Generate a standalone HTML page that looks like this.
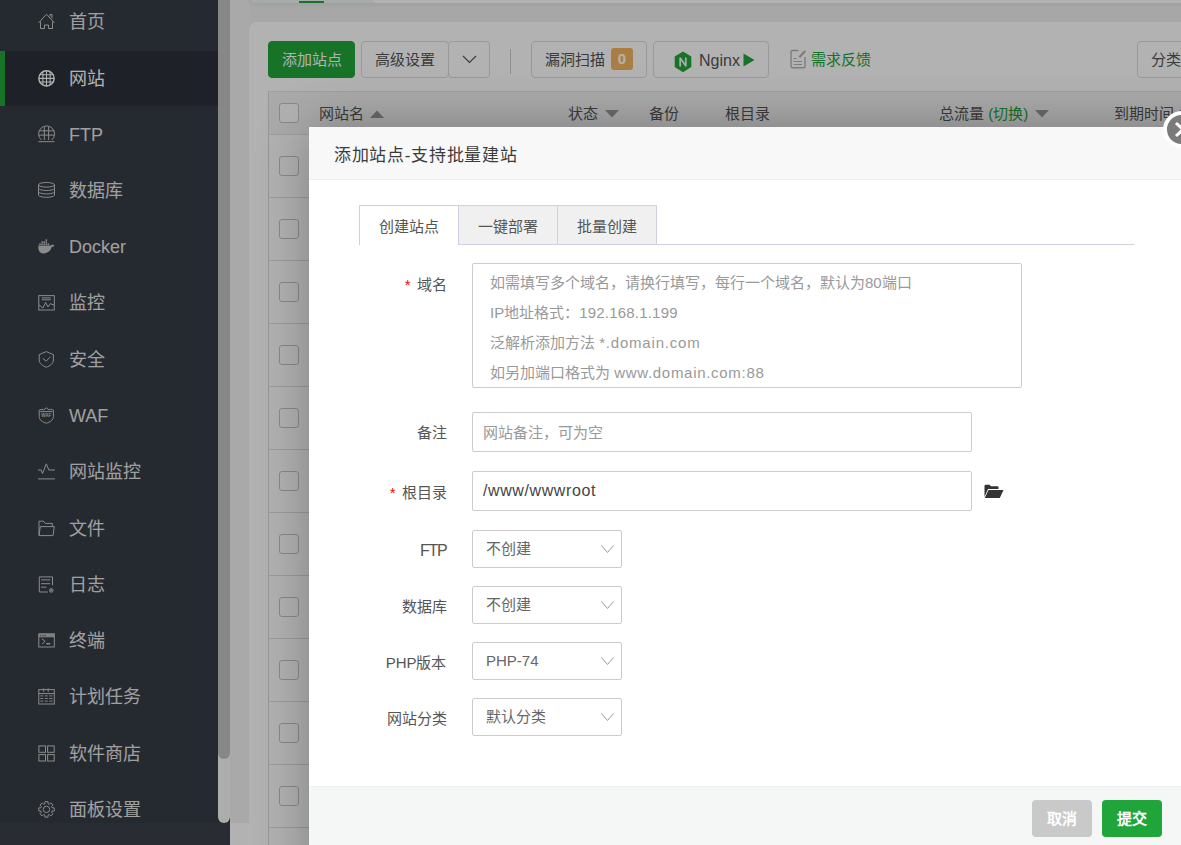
<!DOCTYPE html>
<html lang="zh-CN"><head><meta charset="utf-8">
<style>
*{box-sizing:border-box;margin:0;padding:0}
html,body{width:1181px;height:845px;overflow:hidden}
body{font-family:"Liberation Sans",sans-serif;background:#f0f0f0;position:relative;color:#333}
.abs{position:absolute}
#side{left:0;top:0;width:218px;height:823px;background:#363b45;overflow:hidden}
#sidebot{left:0;top:823px;width:230px;height:22px;background:#3c4149}
.item{position:absolute;left:0;width:218px;height:56px;color:#e6e6e6;font-size:18px}
.item svg{position:absolute;left:38px;top:19.5px;width:17px;height:17px;overflow:visible}
.item .tx{position:absolute;left:69px;top:1px;line-height:56px;white-space:nowrap}
.item.act{background:#2c3038;color:#fff}
.item.act:before{content:"";position:absolute;left:0;top:0;width:5px;height:100%;background:#20a53a}
#pagebg{left:230px;top:0;width:19px;height:823px;background:#f2f2f2}
#sbtrack{left:218px;top:0;width:12px;height:823px;background:#f8f8f8;border-radius:0 0 6px 6px}
#sbthumb{left:218px;top:0;width:12px;height:759px;background:#c2c2c2;border-radius:0 0 6px 6px}
#topcard{left:250px;top:-40px;width:940px;height:43px;background:#fff;border-radius:0 0 0 6px;box-shadow:0 2px 4px rgba(0,0,0,.06)}
#toptab{left:250px;top:-40px;width:124px;height:43px;background:#eff7f1;border-radius:0 0 0 6px}
#topgreen{left:299px;top:1px;width:25px;height:2px;background:#20a53a}
#card{left:249px;top:22px;width:960px;height:823px;background:#fff;border-radius:8px 0 0 0}
#botwhite{left:230px;top:823px;width:40px;height:22px;background:#fff}
.btn{position:absolute;top:41px;height:37px;border:1px solid #dcdcdc;background:#fff;border-radius:4px;font-size:15px;color:#555;line-height:35px;white-space:nowrap}
.btn.g{background:#20a53a;border-color:#20a53a;color:#fff}
#thead{left:268px;top:91px;width:960px;height:44px;background:#f4f4f4;border:1px solid #e4e4e4;border-right:none}
.th{position:absolute;top:92px;line-height:43px;font-size:15px;color:#555;white-space:nowrap}
.cb{position:absolute;left:279px;width:20px;height:20px;border:1px solid #c4c4c4;border-radius:3px;background:#fff}
.rowl{position:absolute;left:268px;width:960px;height:1px;background:#dedede}
#tleft{left:268px;top:91px;width:1px;height:760px;background:#dadada}
#overlay{left:0;top:0;width:1181px;height:845px;background:rgba(0,0,0,.3)}
#modal{left:309px;top:127px;width:940px;height:760px;background:#fff;box-shadow:1px 1px 50px rgba(0,0,0,.3)}
#mhead{left:0;top:0;width:100%;height:53px;background:#f8f8f8;border-bottom:1px solid #eee;font-size:17px;letter-spacing:0.7px;color:#3c3c3c;line-height:57px;padding-left:25px}
#close{left:1163px;top:111px;width:37px;height:37px;border-radius:50%;background:#fff}
#close2{left:1167px;top:115px;width:29px;height:29px;border-radius:50%;background:#7b7b7b}
.tab{position:absolute;top:205px;height:40px;border:1px solid #d2cfe2;background:#f0f0f0;font-size:15px;color:#555;text-align:center;line-height:42px}
.lbl{position:absolute;right:734.5px;font-size:15px;color:#555;white-space:nowrap;text-align:right}
.star{color:#ef0808;margin-right:6px}
.inp{position:absolute;left:472px;border:1px solid #cccccc;border-radius:2px;background:#fff;font-size:15px;white-space:nowrap}
.ph{color:#999}
.sel{position:absolute;left:472px;width:150px;height:38px;border:1px solid #cccccc;border-radius:2px;background:#fff;font-size:15px;color:#666;line-height:35px;padding-left:13px}
.sel svg{position:absolute;left:128px;top:13.5px}
#foot{left:309px;top:786px;width:900px;height:60px;background:#f5f6f6;border-top:1px solid #edeeee}
.fbtn{position:absolute;top:800px;width:60px;height:37px;border-radius:4px;color:#fff;font-size:15px;font-weight:bold;text-align:center;line-height:37px}
</style></head><body>
<div id="side" class="abs">
  <div class="item" style="top:-7px"><svg viewBox="0 0 17 17" fill="none" stroke="#c8c8c8" stroke-width="1"><path d="M0.5 10L8.5 1.2L16.5 10M2.5 8.5V15.5H6.5V12H10.5V15.5H14.5V8.5M12 3.6V1.5H14V5.6"/></svg><span class="tx">首页</span></div>
  <div class="item act" style="top:50px;height:56px;border-top:1px solid #363b45"><svg viewBox="0 0 17 17" style="top:18.5px"><defs><clipPath id="gc"><circle cx="8.5" cy="8.4" r="8"/></clipPath></defs><circle cx="8.5" cy="8.4" r="7.6" fill="none" stroke="#fff" stroke-width="1.4"/><g clip-path="url(#gc)" stroke="#fff" stroke-width="1.1"><path d="M4.9 0V17M8.5 0V17M12.1 0V17M0 4.8H17M0 8.4H17M0 12H17"/></g></svg><span class="tx" style="top:-0.5px">网站</span></div>
  <div class="item" style="top:106px"><svg viewBox="0 0 17 17" fill="none" stroke="#c8c8c8" stroke-width="1"><path d="M3.4 14A8 8 0 1 1 13.8 14M6.3 1V14M10.6 1V14M0.8 4.8H16.2M0.5 9.1H16.5M0.5 15.7H16.5"/></svg><span class="tx">FTP</span></div>
  <div class="item" style="top:162px"><svg viewBox="0 0 17 17" fill="none" stroke="#c8c8c8" stroke-width="1"><ellipse cx="8.5" cy="2.8" rx="8" ry="2.3"/><path d="M0.5 2.8V13C0.5 14.3 4 15.3 8.5 15.3S16.5 14.3 16.5 13V2.8M0.5 6.2C0.5 7.5 4 8.5 8.5 8.5S16.5 7.5 16.5 6.2M0.5 9.6C0.5 10.9 4 11.9 8.5 11.9S16.5 10.9 16.5 9.6"/></svg><span class="tx">数据库</span></div>
  <div class="item" style="top:218px"><svg viewBox="0 0 17 17" fill="#c8c8c8"><path d="M0.4 7.6H13.2L14.6 6.6L16.5 7.3L15.8 8.2Q14.6 8.8 13.6 9.2Q12 14.5 6 15.5Q1 15.6 0.4 10.5Z"/><rect x="1.2" y="5.4" width="1.6" height="1.5"/><rect x="3.3" y="5.4" width="1.6" height="1.5"/><rect x="5.4" y="5.4" width="1.6" height="1.5"/><rect x="7.5" y="5.4" width="1.6" height="1.5"/><rect x="9.6" y="5.4" width="1.6" height="1.5"/><rect x="3.3" y="3.4" width="1.6" height="1.5"/><rect x="5.4" y="3.4" width="1.6" height="1.5"/><rect x="7.5" y="3.4" width="1.6" height="1.5"/><rect x="7.5" y="1.4" width="1.6" height="1.5"/></svg><span class="tx">Docker</span></div>
  <div class="item" style="top:274px"><svg viewBox="0 0 17 17" fill="none" stroke="#c8c8c8" stroke-width="1"><rect x="0.8" y="1.6" width="15.5" height="14.4"/><path d="M3.8 3.9H12.8M3.8 5.8H12.8"/><path d="M1 11L5 14L7.6 8.4L10 13L12.4 9.6L16 11.2"/></svg><span class="tx">监控</span></div>
  <div class="item" style="top:331px"><svg viewBox="0 0 17 17" fill="none" stroke="#c8c8c8" stroke-width="1"><path d="M8.3 0.6L15.4 3.6V9C15.4 12.5 12 15 8.3 16.2C4.6 15 1.2 12.5 1.2 9V3.6Z"/><path d="M4.8 7.3L8.2 10.1L12.5 5.7"/></svg><span class="tx">安全</span></div>
  <div class="item" style="top:387px"><svg viewBox="0 0 17 17" fill="none" stroke="#c8c8c8" stroke-width="1"><path d="M1.2 3.2L4 2.2L5.5 3L8.3 0.8L11 3L12.6 2.2L15.4 3.2V9.5C15.4 13 12 15.2 8.3 16.2C4.6 15.2 1.2 13 1.2 9.5Z"/><path d="M2.3 4.6H14.3" /><text x="8.3" y="10" font-size="4.5" font-family="Liberation Sans" font-weight="bold" text-anchor="middle" fill="#c8c8c8" stroke="none">WAF</text></svg><span class="tx">WAF</span></div>
  <div class="item" style="top:443px"><svg viewBox="0 0 17 17" fill="none" stroke="#c8c8c8" stroke-width="1"><path d="M0 7H3.2L4.5 10.5L8.3 0.8L10.8 7H17M0 15.9H17"/></svg><span class="tx">网站监控</span></div>
  <div class="item" style="top:500px"><svg viewBox="0 0 17 17" fill="none" stroke="#c8c8c8" stroke-width="1"><path d="M1 15V1.2H5.5L7.2 3.4H14.3V6.3M1 15.6H15L16.3 6.6H2.3L1 15.6"/></svg><span class="tx">文件</span></div>
  <div class="item" style="top:556px"><svg viewBox="0 0 17 17" fill="none" stroke="#c8c8c8" stroke-width="1"><path d="M9.8 16H1.3V0.9H14.5V9.3M3 3.9H12.3M3 7.7H12.3M3 11.2H8.5"/><circle cx="13.3" cy="14.4" r="1.8"/><circle cx="13.3" cy="14.4" r="0.6" fill="#c8c8c8"/></svg><span class="tx">日志</span></div>
  <div class="item" style="top:612px"><svg viewBox="0 0 17 17" fill="none" stroke="#c8c8c8" stroke-width="1"><rect x="0.8" y="1.8" width="15.5" height="13.2"/><rect x="0.8" y="1.8" width="15.5" height="3.5" fill="#b8b8b8" stroke="none"/><g fill="#555" stroke="none"><rect x="2" y="3.2" width="1" height="1"/><rect x="3.8" y="3.2" width="1" height="1"/><rect x="5.4" y="3.2" width="1" height="1"/><rect x="7" y="3.2" width="1" height="1"/></g><path d="M3.8 6.8L7.2 9.3L4 12.1"/><path d="M8.2 11.7H12.2" stroke-width="1.5"/></svg><span class="tx">终端</span></div>
  <div class="item" style="top:668px"><svg viewBox="0 0 17 17" fill="none" stroke="#c8c8c8" stroke-width="1"><rect x="0.8" y="1.6" width="15.5" height="14.4"/><path d="M0.8 5.6H16.3M5.7 0.4V3.8M10.2 0.4V3.8"/><path d="M2.3 7.9H5.3M6.8 7.9H9.8M11.2 7.9H14.5M2.3 10.5H5.3M6.8 10.5H9.8M11.2 10.5H14.5M2.3 13.1H5.3M6.8 13.1H9.8M11.2 13.1H14.5" stroke-width="0.9"/></svg><span class="tx">计划任务</span></div>
  <div class="item" style="top:725px"><svg viewBox="0 0 17 17" fill="none" stroke="#c8c8c8" stroke-width="1"><rect x="0.9" y="0.9" width="6.6" height="6.4"/><rect x="9.6" y="0.9" width="6.6" height="6.4"/><rect x="0.9" y="9.6" width="6.6" height="6.4"/><rect x="9.6" y="9.6" width="6.6" height="6.4"/></svg><span class="tx">软件商店</span></div>
  <div class="item" style="top:781px"><svg viewBox="0 0 17 17" fill="none" stroke="#c8c8c8" stroke-width="1"><path d="M6.88 2.83 L6.96 0.65 L10.04 0.65 L10.12 2.83 L11.29 3.32 L12.89 1.83 L15.07 4.01 L13.58 5.61 L14.07 6.78 L16.25 6.86 L16.25 9.94 L14.07 10.02 L13.58 11.19 L15.07 12.79 L12.89 14.97 L11.29 13.48 L10.12 13.97 L10.04 16.15 L6.96 16.15 L6.88 13.97 L5.71 13.48 L4.11 14.97 L1.93 12.79 L3.42 11.19 L2.93 10.02 L0.75 9.94 L0.75 6.86 L2.93 6.78 L3.42 5.61 L1.93 4.01 L4.11 1.83 L5.71 3.32Z"/><circle cx="8.5" cy="8.4" r="3.2"/></svg><span class="tx">面板设置</span></div>
</div>
<div id="sidebot" class="abs"></div><div class="abs" style="left:218px;top:800px;width:12px;height:23px;background:#363b45"></div>
<div id="pagebg" class="abs"></div>
<div id="sbtrack" class="abs"></div>
<div id="sbthumb" class="abs"></div>
<div id="topcard" class="abs"></div>
<div id="toptab" class="abs"></div>
<div id="topgreen" class="abs"></div>
<div id="botwhite" class="abs"></div><div id="card" class="abs"></div>

<div class="btn g" style="left:268px;width:87px;text-align:center">添加站点</div>
<div class="btn" style="left:361px;width:88px;text-align:center">高级设置</div>
<div class="btn" style="left:448px;width:42px"><svg class="abs" style="left:13px;top:13px" width="15" height="9" viewBox="0 0 15 9" fill="none" stroke="#555" stroke-width="1.2"><path d="M1 1L7.5 7.5L14 1"/></svg></div>
<div class="abs" style="left:510px;top:49px;width:1px;height:25px;background:#ccc"></div>
<div class="btn" style="left:531px;width:116px;padding-left:13px">漏洞扫描<span class="abs" style="left:79px;top:6px;width:22px;height:22px;border-radius:3px;background:#f4b560;color:#fff;font-weight:bold;font-size:15px;line-height:22px;text-align:center">0</span></div>
<div class="btn" style="left:653px;width:116px;padding-left:45px;font-size:16px;color:#555;line-height:37px">Nginx<svg class="abs" style="left:19.5px;top:8.5px" width="18" height="22" viewBox="0 0 18 21" preserveAspectRatio="none"><path d="M9 0.5L17.3 5.2V15.3L9 20.3L0.7 15.3V5.2Z" fill="#20a53a"/><path d="M5.8 14.5V6.5H6.6L11.4 13V6.5H12.2V14.5H11.4L6.6 8V14.5Z" fill="#fff" stroke="#fff" stroke-width="0.8"/></svg><svg class="abs" style="left:89px;top:11px" width="12" height="14" viewBox="0 0 12 14"><path d="M0.5 0.5L11.5 7L0.5 13.5Z" fill="#20a53a"/></svg></div>
<svg class="abs" style="left:790px;top:49px" width="17" height="20" viewBox="0 0 17 20" fill="none" stroke="#b4b4b4" stroke-width="1.4"><path d="M8.5 1.5H2.5Q1 1.5 1 3V17.3Q1 18.8 2.5 18.8H13.5Q15 18.8 15 17.3V8"/><path d="M9.3 8.2L15.2 2" stroke-width="2.2"/><path d="M3.5 9.5H6.5M3.5 12.5H12M3.5 15.5H12" stroke-width="1.2"/></svg>
<div class="abs" style="left:811px;top:41px;line-height:37px;font-size:15px;color:#20a53a;white-space:nowrap">需求反馈</div>
<div class="btn" style="left:1137px;width:80px;padding-left:13px">分类</div>

<div id="thead" class="abs"></div>
<div class="cb" style="top:103px"></div>
<div class="th" style="left:319px">网站名<svg class="abs" style="left:51px;top:18px" width="14" height="8" viewBox="0 0 14 8"><path d="M0 8L7 0.5L14 8Z" fill="#999"/></svg></div>
<div class="th" style="left:568px">状态<svg class="abs" style="left:37px;top:18px" width="14" height="8" viewBox="0 0 14 8"><path d="M0 0L7 7.5L14 0Z" fill="#999"/></svg></div>
<div class="th" style="left:649px">备份</div>
<div class="th" style="left:725px">根目录</div>
<div class="th" style="left:939px">总流量 <span style="color:#20a53a">(切换)</span><svg class="abs" style="left:96px;top:18px" width="14" height="8" viewBox="0 0 14 8"><path d="M0 0L7 7.5L14 0Z" fill="#999"/></svg></div>
<div class="th" style="left:1114px">到期时间<svg class="abs" style="left:65px;top:18px" width="14" height="8" viewBox="0 0 14 8"><path d="M0 0L7 7.5L14 0Z" fill="#999"/></svg></div>
<div id="tleft" class="abs"></div>
<div class="rowl" style="top:197px"></div><div class="rowl" style="top:260px"></div><div class="rowl" style="top:323px"></div><div class="rowl" style="top:386px"></div><div class="rowl" style="top:449px"></div><div class="rowl" style="top:512px"></div><div class="rowl" style="top:575px"></div><div class="rowl" style="top:638px"></div><div class="rowl" style="top:701px"></div><div class="rowl" style="top:764px"></div><div class="rowl" style="top:827px"></div>
<div class="cb" style="top:156px"></div><div class="cb" style="top:219px"></div><div class="cb" style="top:282px"></div><div class="cb" style="top:345px"></div><div class="cb" style="top:408px"></div><div class="cb" style="top:471px"></div><div class="cb" style="top:534px"></div><div class="cb" style="top:597px"></div><div class="cb" style="top:660px"></div><div class="cb" style="top:723px"></div><div class="cb" style="top:786px"></div>

<div id="overlay" class="abs"></div>
<div id="modal" class="abs"><div id="mhead" class="abs">添加站点-支持批量建站</div></div>
<div id="close" class="abs"></div>
<div id="close2" class="abs"></div>
<svg class="abs" style="left:1173.5px;top:121px" width="12" height="17" viewBox="0 0 12 17"><path d="M2 2L16 15M16 2L2 15" stroke="#fff" stroke-width="3"/></svg>

<div class="abs" style="left:359px;top:244px;width:775px;height:1px;background:#d2cfe2"></div>
<div class="tab" style="left:359px;width:100px;background:#fff;border-bottom:none;height:40px">创建站点</div>
<div class="tab" style="left:458px;width:100px">一键部署</div>
<div class="tab" style="left:557px;width:100px">批量创建</div>

<div class="lbl" style="top:273px"><span class="star">*</span>域名</div>
<div class="inp" style="top:263px;width:550px;height:125px;padding:3.5px 0 0 17px;line-height:30px"><div class="ph">如需填写多个域名，请换行填写，每行一个域名，默认为80端口</div><div class="ph">IP地址格式：<span style="letter-spacing:0.2px">192.168.1.199</span></div><div class="ph">泛解析添加方法 <span style="letter-spacing:0.8px">*.domain.com</span></div><div class="ph">如另加端口格式为 <span style="letter-spacing:0.7px">www.domain.com:88</span></div></div>

<div class="lbl" style="top:421px">备注</div>
<div class="inp ph" style="top:412px;width:500px;height:40px;line-height:40px;padding-left:10px">网站备注，可为空</div>

<div class="lbl" style="top:481px"><span class="star">*</span>根目录</div>
<div class="inp" style="top:471px;width:500px;height:40px;line-height:38px;padding-left:10px;color:#444;font-size:16px;letter-spacing:0.6px">/www/wwwroot</div>
<svg class="abs" style="left:984px;top:484px" width="20" height="15" viewBox="0 0 20 15"><path d="M0.5 13V2Q0.5 0.8 1.7 0.8H5.5L7 2.3H13.5Q14.5 2.3 14.5 3.3V5H4L0.5 13Z" fill="#333"/><path d="M4.5 6H19.5L15.8 14H0.8Z" fill="#333"/></svg>

<div class="lbl" style="top:542px;font-size:16px;letter-spacing:-1.2px">FTP</div>
<div class="sel" style="top:530px">不创建<svg width="13" height="9" viewBox="0 0 13 9" fill="none" stroke="#999" stroke-width="1"><path d="M0.5 0.5L6.5 7.5L12.5 0.5"/></svg></div>
<div class="lbl" style="top:595px">数据库</div>
<div class="sel" style="top:586px">不创建<svg width="13" height="9" viewBox="0 0 13 9" fill="none" stroke="#999" stroke-width="1"><path d="M0.5 0.5L6.5 7.5L12.5 0.5"/></svg></div>
<div class="lbl" style="top:651px">PHP版本</div>
<div class="sel" style="top:642px">PHP-74<svg width="13" height="9" viewBox="0 0 13 9" fill="none" stroke="#999" stroke-width="1"><path d="M0.5 0.5L6.5 7.5L12.5 0.5"/></svg></div>
<div class="lbl" style="top:707px">网站分类</div>
<div class="sel" style="top:698px">默认分类<svg width="13" height="9" viewBox="0 0 13 9" fill="none" stroke="#999" stroke-width="1"><path d="M0.5 0.5L6.5 7.5L12.5 0.5"/></svg></div>

<div id="foot" class="abs"></div>
<div class="fbtn" style="left:1032px;background:#c9c9c9">取消</div>
<div class="fbtn" style="left:1102px;background:#20a53a">提交</div>
</body></html>
